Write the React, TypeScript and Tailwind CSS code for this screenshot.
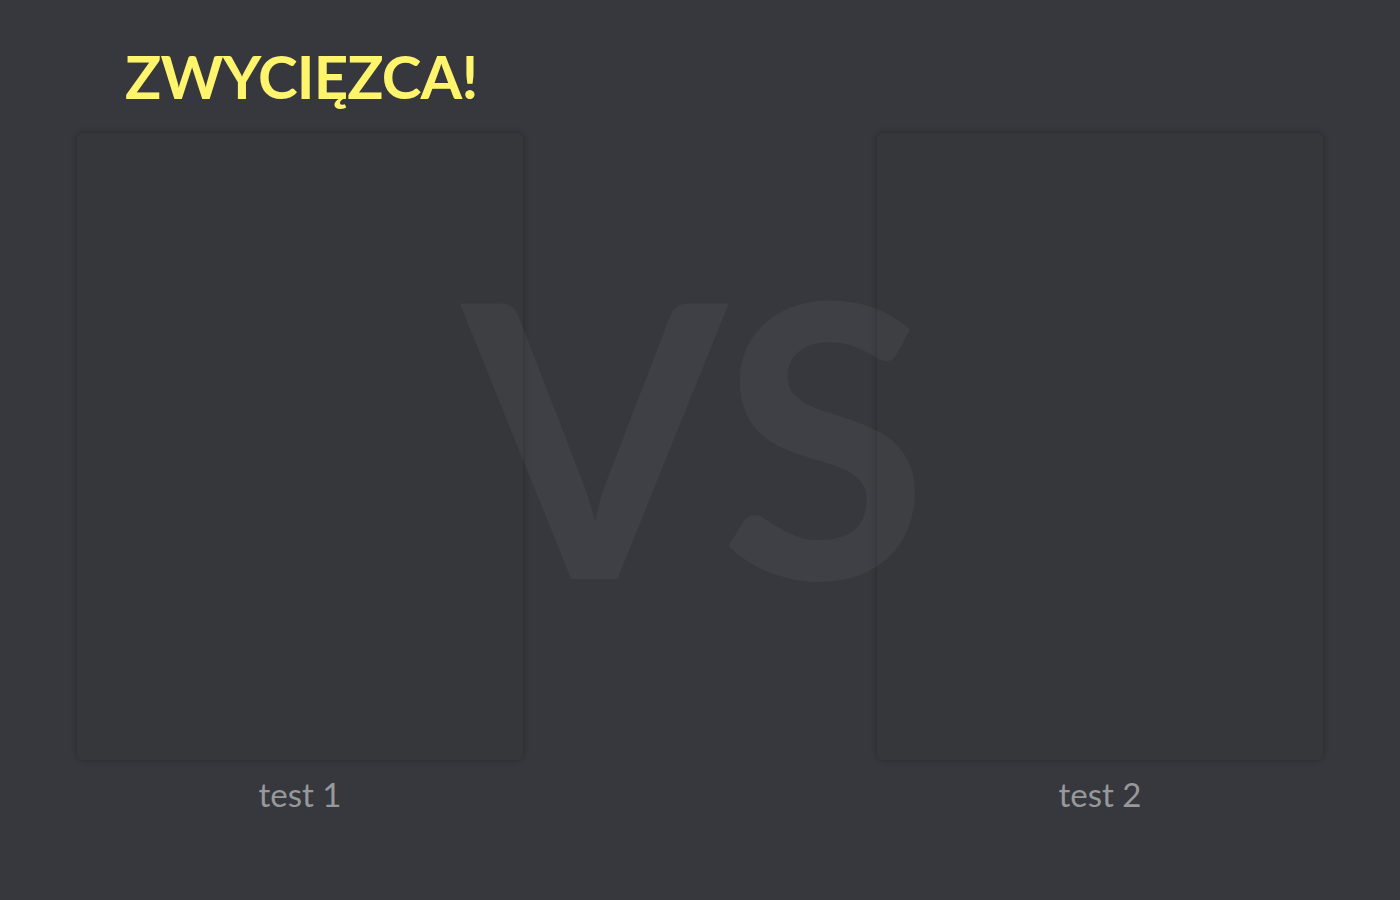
import React from "react"

const players = ["test 1", "test 2"]

export default function App() {
  return (
    <div
      className="relative w-full h-[900px] overflow-hidden bg-[#36383d]"
      style={{ fontFamily: "Lato, 'Noto Sans', sans-serif" }}
    >
      <h1 className="pl-[125px] pt-[40px] text-[60px] leading-[72px] font-bold text-[#fff56d] tracking-[-0.9px]">
        ZWYCIĘZCA!
      </h1>

      <div className="flex justify-between px-[77px] mt-[21px]">
        {players.map((p) => (
          <div key={p} className="flex flex-col items-center w-[446px]">
            <div className="w-full h-[627px] rounded-md bg-[#35373b] shadow-[0_0_6px_rgba(0,0,0,0.25)]" />
            <div className="mt-[12px] text-[33px] leading-[44px] text-[#96989c]">{p}</div>
          </div>
        ))}
      </div>

      {/* big VS drawn over the cards */}
      <div className="pointer-events-none absolute left-[462px] top-[202px] text-[381px] leading-[460px] font-bold text-white/[0.045] tracking-[0px]">
        VS
      </div>
    </div>
  )
}
